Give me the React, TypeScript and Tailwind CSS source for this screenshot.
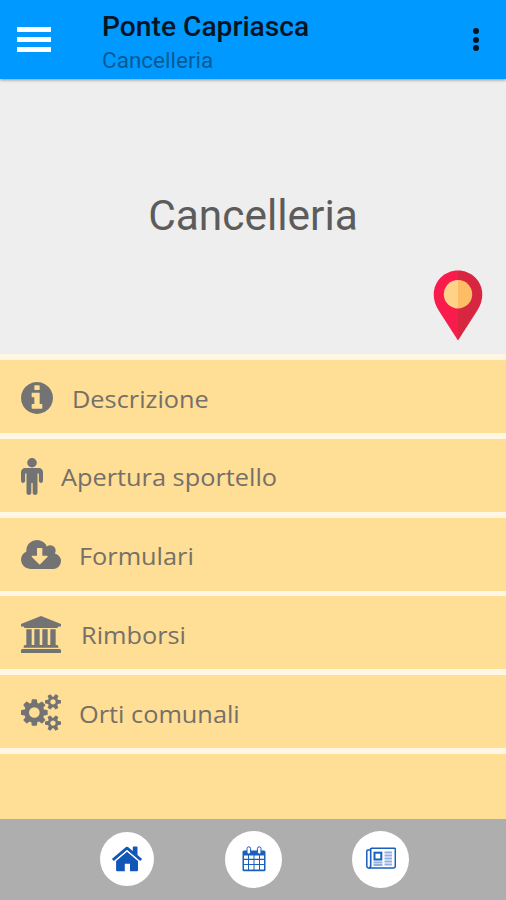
import React from "react";

type Item = { label: string; viewBox: string; icon: string; path: string; text: string };

const COG_SMALL =
  "v140q0 16-149 31-12 27-30 52 51 113 51 138 0 4-4 7-122 71-124 71-8 0-46-47t-52-68q-20 2-30 2t-30-2q-14 21-52 68t-46 47q-2 0-124-71-4-3-4-7 0-25 51-138-18-25-30-52-149-15-149-31v-140q0-16 149-31 13-29 30-52-51-113-51-138 0-4 4-7 4-2 35-20t59-34 30-16q8 0 46 46.5t52 67.5q20-2 30-2t30 2q51-71 92-112l6-2q4 0 124 70 4 3 4 7 0 25-51 138 17 23 30 52 149 15 149 31z";

const items: Item[] = [
  {
    label: "Descrizione",
    viewBox: "128 128 1536 1536",
    icon: "ml-[21px] h-8 w-8",
    text: "ml-[19px] mt-0.5",
    path: "M1152 1376v-160q0-14-9-23t-23-9h-96v-512q0-14-9-23t-23-9h-320q-14 0-23 9t-9 23v160q0 14 9 23t23 9h96v320h-96q-14 0-23 9t-9 23v160q0 14 9 23t23 9h448q14 0 23-9t9-23zm-128-896v-160q0-14-9-23t-23-9h-192q-14 0-23 9t-9 23v160q0 14 9 23t23 9h192q14 0 23-9t9-23zm640 416q0 209-103 385.5t-279.5 279.5-385.5 103-385.5-103-279.5-279.5-103-385.5 103-385.5 279.5-279.5 385.5-103 385.5 103 279.5 279.5 103 385.5z",
  },
  {
    label: "Apertura sportello",
    viewBox: "0 -64 1024 1760",
    icon: "ml-[21px] h-[37px] w-[22px]",
    text: "ml-[18px] mt-px",
    path: "M1024 608v416q0 40-28 68t-68 28-68-28-28-68v-352h-64v912q0 46-33 79t-79 33-79-33-33-79v-464h-64v464q0 46-33 79t-79 33-79-33-33-79v-912h-64v352q0 40-28 68t-68 28-68-28-28-68v-416q0-80 56-136t136-56h640q80 0 136 56t56 136zm-288-448q0 93-65.5 158.5t-158.5 65.5-158.5-65.5-65.5-158.5 65.5-158.5 158.5-65.5 158.5 65.5 65.5 158.5z",
  },
  {
    label: "Formulari",
    viewBox: "-64 128 1920 1408",
    icon: "ml-[21px] mb-0.5 h-[29px] w-10",
    text: "ml-[18px] mt-px",
    path: "M1216 928q0-14-9-23t-23-9h-224v-352q0-13-9.5-22.5t-22.5-9.5h-192q-13 0-22.5 9.5t-9.5 22.5v352h-224q-13 0-22.5 9.5t-9.5 22.5q0 14 9 23l352 352q9 9 23 9t23-9l351-351q10-12 10-24zm640 224q0 159-112.5 271.5t-271.5 112.5h-1088q-185 0-316.5-131.5t-131.5-316.5q0-130 70-240t188-165q-2-30-2-43 0-212 150-362t362-150q156 0 285.5 87t188.5 231q71-62 166-62 106 0 181 75t75 181q0 76-41 138 130 31 213.5 135.5t83.5 238.5z",
  },
  {
    label: "Rimborsi",
    viewBox: "0 0 1920 1792",
    icon: "ml-[21px] mt-px h-[37px] w-10",
    text: "ml-[20px] mt-[3px]",
    path: "M960 0l960 384v128h-128q0 26-20.5 45t-48.5 19h-1526q-28 0-48.5-19t-20.5-45h-128v-128zm-704 640h256v768h128v-768h256v768h128v-768h256v768h128v-768h256v768h59q28 0 48.5 19t20.5 45v64h-1664v-64q0-26 20.5-45t48.5-19h59v-768zm1595 960q28 0 48.5 19t20.5 45v128h-1920v-128q0-26 20.5-45t48.5-19h1782z",
  },
  {
    label: "Orti comunali",
    viewBox: "0 0 1920 1792",
    icon: "ml-[21px] h-[37px] w-10",
    text: "ml-[18px] mt-[3px]",
    path:
      "M896 896q0-106-75-181t-181-75-181 75-75 181 75 181 181 75 181-75 75-181zm768 512q0-52-38-90t-90-38-90 38-38 90q0 53 37.5 90.5t90.5 37.5 90.5-37.5 37.5-90.5zm0-1024q0-52-38-90t-90-38-90 38-38 90q0 53 37.5 90.5t90.5 37.5 90.5-37.5 37.5-90.5zm-384 421v185q0 10-7 19.5t-16 10.5l-155 24q-11 35-32 76 34 48 90 115 7 11 7 20 0 12-7 19-23 30-82.5 89.5t-78.5 59.5q-11 0-21-7l-115-90q-37 19-77 31-11 108-23 155-7 24-30 24h-186q-11 0-20-7.5t-10-17.5l-23-153q-34-10-75-31l-118 89q-7 7-20 7-11 0-21-8-144-133-144-160 0-9 7-19 10-14 41-53t47-61q-23-44-35-82l-152-24q-10-1-17-9.5t-7-19.5v-185q0-10 7-19.5t16-10.5l155-24q11-35 32-76-34-48-90-115-7-11-7-20 0-12 7-20 22-30 82-89t79-59q11 0 21 7l115 90q34-18 77-32 11-108 23-154 7-24 30-24h186q11 0 20 7.5t10 17.5l23 153q34 10 75 31l118-89q8-7 20-7 11 0 21 8 144 133 144 160 0 8-7 19-12 16-42 54t-45 60q23 48 34 82l152 23q10 2 17 10.5t7 19.5z" +
      "M1920 1338" + COG_SMALL + "M1920 314" + COG_SMALL,
  },
];

function Header() {
  return (
    <header className="z-10 flex h-[79px] shrink-0 bg-[#0099ff] shadow-[0_1px_3px_rgba(0,0,0,0.4)]">
      <button aria-label="Menu" className="mt-[27px] ml-[17px] flex h-[25px] w-[34px] flex-col justify-between">
        <span className="h-[5px] w-full bg-white" />
        <span className="h-[5px] w-full bg-white" />
        <span className="h-[5px] w-full bg-white" />
      </button>
      <div className="ml-[51px] pt-[10px] whitespace-nowrap">
        <h1 className="text-[28.2px] leading-[34px] font-medium text-[#061523]">Ponte Capriasca</h1>
        <p className="text-[22.5px] leading-8 text-[#075994]">Cancelleria</p>
      </div>
      <button aria-label="Altro" className="mt-[28px] mr-[27px] ml-auto flex h-[23px] w-1.5 flex-col justify-between">
        <span className="size-1.5 rounded-full bg-[#061523]" />
        <span className="size-1.5 rounded-full bg-[#061523]" />
        <span className="size-1.5 rounded-full bg-[#061523]" />
      </button>
    </header>
  );
}

function Pin() {
  return (
    <svg viewBox="0 0 50 71" className="h-[71px] w-[50px]">
      <path d="M25 .5C11.500.5.700 11.200.700 24.500c0 6 2 11 5 16L25 70.500z" fill="#fa1b4d" />
      <path d="M25 .5c13.500 0 24.300 10.700 24.300 24 0 6-2 11-5 16L25 70.500z" fill="#d7263f" />
      <path d="M25 10a14.200 14.200 0 0 0 0 28.400z" fill="#ffd28a" />
      <path d="M25 10a14.200 14.200 0 0 1 0 28.400z" fill="#fdbd66" />
    </svg>
  );
}

function HomeIcon() {
  return (
    <svg viewBox="0 0 30 26" className="h-[26px] w-[30px]" fill="#1057b8">
      <path d="M15 5.800 26 15v9q0 1.200-1.200 1.200H18v-7.500h-5.200v7.500H5.300q-1.200 0-1.200-1.200v-9z" />
      <path d="M14 1.100q1-.8 2 0l4.800 4V1.300q0-.7.700-.7h3.300q.7 0 .7.700v7.600l4.100 3.500q.6.500.1 1.100l-1 1.100q-.5.500-1.100 0L15 4.100 2.400 14.600q-.6.500-1.100 0l-1-1.100q-.5-.6.100-1.100z" />
      <path d="M2.900 14.900 15 4.700l12.100 10.200" fill="none" stroke="#fff" strokeWidth="1" />
    </svg>
  );
}

function CalendarIcon() {
  return (
    <svg viewBox="0 0 24 26" className="mb-px h-[26px] w-6">
      <path d="M2 4.500h20q1.500 0 1.500 1.500v17.700q0 1.500-1.500 1.500H2Q.5 25.200.5 23.700V6Q.5 4.500 2 4.500z" fill="#1a5fbc" />
      <path
        d="M2 9.500h4v3.300H2zm5 0h4.500v3.300H7zm5.500 0H17v3.300h-4.500zm5.500 0h4v3.300h-4zM2 13.900h4v4H2zm5 0h4.500v4H7zm5.500 0H17v4h-4.500zm5.500 0h4v4h-4zM2 19h4v4.500H2zm5 0h4.500v4.500H7zm5.500 0H17v4.500h-4.500zm5.500 0h4v4.500h-4z"
        fill="#fff"
      />
      <rect x="5" y=".8" width="3.600" height="7.200" rx="1.800" fill="#fff" stroke="#1a5fbc" />
      <rect x="15.400" y=".8" width="3.600" height="7.200" rx="1.800" fill="#fff" stroke="#1a5fbc" />
    </svg>
  );
}

function NewsIcon() {
  return (
    <svg viewBox="0 0 30 22" className="mb-[3px] h-[22px] w-[30px]" fill="none" stroke="#1a5fbc">
      <path d="M5 1.200h23.500q.8 0 .8.800v17q0 2-2 2H3Q.8 21 .8 18.500V4q0-1 1-1H4.200" strokeWidth="1.500" />
      <path d="M4.700 1v17.500Q4.700 21 2.700 21" strokeWidth="1.600" />
      <rect x="8.500" y="5.700" width="6.800" height="6.800" strokeWidth="2" />
      <path d="M18.500 5.500h7.500M18.500 8.500h7.500M18.500 11.500h7.500M18.500 14.500h7.500M18.500 17.500h7.500M7.500 15.500h9M7.500 18h9" stroke="#91afe0" strokeWidth="1.900" />
    </svg>
  );
}

export default function App() {
  return (
    <div className="flex h-[900px] w-[506px] flex-col overflow-hidden bg-[#fff6e3] font-[Roboto,sans-serif]">
      <Header />
      <section className="relative flex h-[275px] shrink-0 items-center justify-center bg-[#eeeeee]">
        <h2 className="text-[42.400px] leading-none whitespace-nowrap text-[#5c5c5c]">Cancelleria</h2>
        <div className="absolute top-[191px] left-[432.500px]">
          <Pin />
        </div>
      </section>
      <ul className="flex h-[465px] shrink-0 flex-col gap-[5.750px] overflow-hidden pt-1.5">
        {items.map((item) => (
          <li key={item.label} className="flex h-[73px] shrink-0 items-center bg-[#ffde95] pt-0.5">
            <svg viewBox={item.viewBox} preserveAspectRatio="none" className={"shrink-0 fill-[#737373] " + item.icon}>
              <path d={item.path} />
            </svg>
            <span
              className={
                "origin-left scale-x-[1.055] font-['Open_Sans',sans-serif] text-[24px] leading-8 whitespace-nowrap text-[#757068] " +
                item.text
              }
            >
              {item.label}
            </span>
          </li>
        ))}
        <li className="h-[73px] shrink-0 bg-[#ffde95]" />
      </ul>
      <nav className="flex h-[81px] shrink-0 bg-[#aeaeae] pt-3 pl-[100px]">
        <a className="mt-px flex size-[54px] items-center justify-center rounded-full bg-white">
          <HomeIcon />
        </a>
        <a className="ml-[71px] flex size-[57px] items-center justify-center rounded-full bg-white">
          <CalendarIcon />
        </a>
        <a className="ml-[70px] flex size-[57px] items-center justify-center rounded-full bg-white">
          <NewsIcon />
        </a>
      </nav>
    </div>
  );
}
